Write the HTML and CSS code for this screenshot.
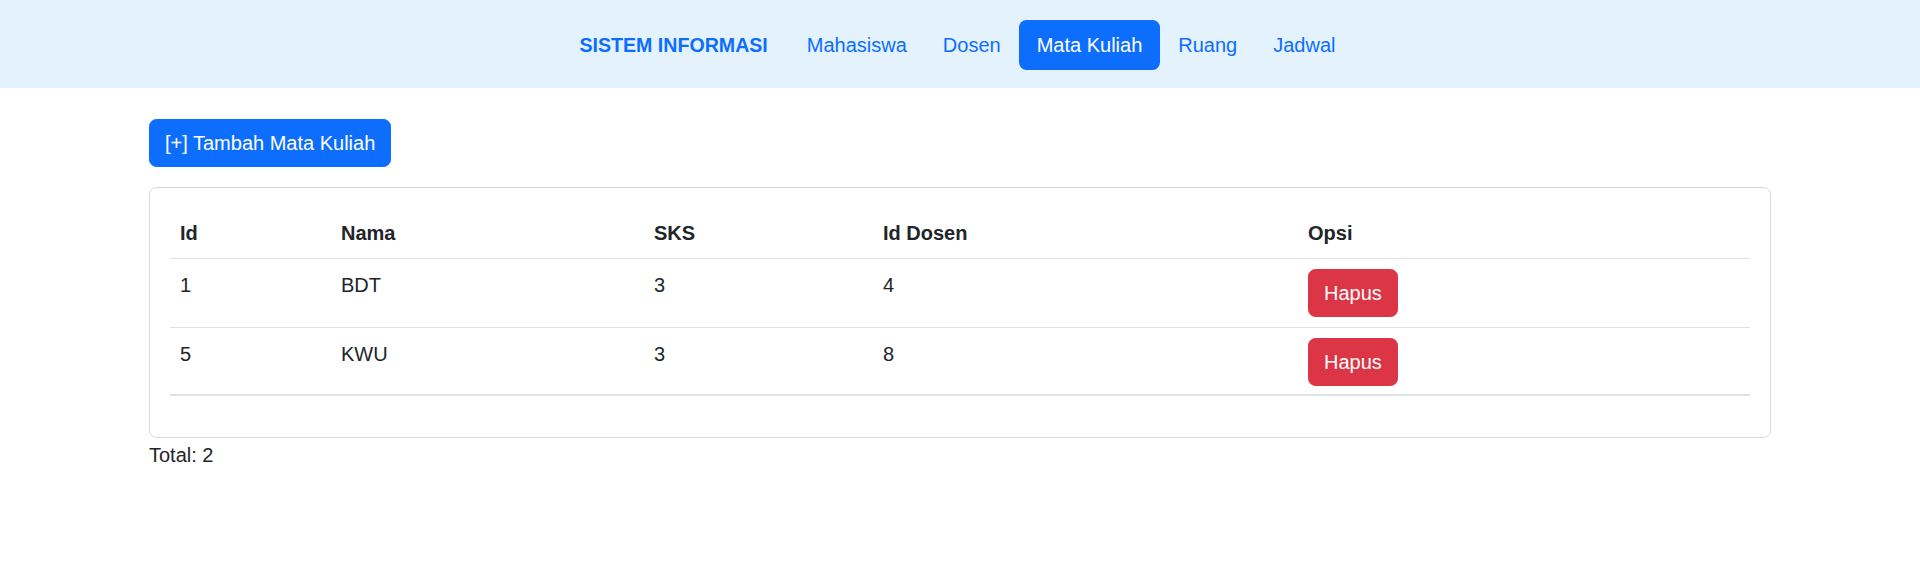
FILE: index.html
```html
<!DOCTYPE html>
<html lang="id">
<head>
<meta charset="utf-8">
<title>Mata Kuliah</title>
<link rel="stylesheet" href="styles.css">
</head>
<body>
<nav class="navbar">
  <div class="nav-inner">
    <a class="brand" href="#">SISTEM INFORMASI</a>
    <ul class="nav-links">
      <li><a class="nav-link" href="#">Mahasiswa</a></li>
      <li><a class="nav-link" href="#">Dosen</a></li>
      <li><a class="nav-link active" href="#">Mata Kuliah</a></li>
      <li><a class="nav-link" href="#">Ruang</a></li>
      <li><a class="nav-link" href="#">Jadwal</a></li>
    </ul>
  </div>
</nav>
<main class="container">
  <button class="btn btn-primary">[+] Tambah Mata Kuliah</button>
  <div class="card">
    <div class="card-body">
      <table class="table">
        <thead>
          <tr>
            <th class="c-id">Id</th>
            <th class="c-nama">Nama</th>
            <th class="c-sks">SKS</th>
            <th class="c-dosen">Id Dosen</th>
            <th class="c-opsi">Opsi</th>
          </tr>
        </thead>
        <tbody>
          <tr>
            <td>1</td>
            <td>BDT</td>
            <td>3</td>
            <td>4</td>
            <td><button class="btn btn-danger">Hapus</button></td>
          </tr>
          <tr>
            <td>5</td>
            <td>KWU</td>
            <td>3</td>
            <td>8</td>
            <td><button class="btn btn-danger">Hapus</button></td>
          </tr>
        </tbody>
      </table>
    </div>
  </div>
  <p class="total">Total: 2</p>
</main>
</body>
</html>
```
FILE: styles.css
```css
* { box-sizing: border-box; }
html, body { margin: 0; padding: 0; }
body {
  font-family: "Liberation Sans", Arial, sans-serif;
  font-size: 20px;
  line-height: 30px;
  color: #212529;
  background: #fff;
}
.navbar {
  background: #e3f2fd;
  height: 88px;
  display: flex;
  align-items: center;
  justify-content: center;
  padding-top: 2px;
}
.nav-inner {
  display: flex;
  align-items: center;
  padding-left: 13px;
}
.brand {
  color: #0d6efd;
  font-weight: bold;
  font-size: 19.6px;
  text-decoration: none;
  margin-right: 21px;
}
.nav-links {
  display: flex;
  list-style: none;
  margin: 0;
  padding: 0;
}
.nav-link {
  display: block;
  padding: 10px 18px;
  line-height: 30px;
  color: #0d6efd;
  text-decoration: none;
  border-radius: 7.5px;
}
.nav-link.active {
  background: #0d6efd;
  color: #fff;
}
.container {
  width: 1622px;
  margin: 0 auto;
  padding-top: 31px;
}
.btn {
  font-family: inherit;
  font-size: 20px;
  line-height: 30px;
  padding: 8px 15px;
  border: 1px solid transparent;
  border-radius: 7.5px;
  color: #fff;
  cursor: pointer;
}
.btn-primary { background: #0d6efd; border-color: #0d6efd; }
.btn-danger { background: #dc3545; border-color: #dc3545; }
.card {
  margin-top: 20px;
  border: 1.25px solid #d6d7d8;
  border-radius: 7.5px;
}
.card-body { padding: 20px; }
.table {
  width: 100%;
  border-collapse: collapse;
  margin-bottom: 21px;
}
.table th, .table td {
  text-align: left;
  vertical-align: top;
  padding: 10px;
  border-bottom: 1px solid #dee2e6;
}
.table th { font-weight: bold; }
.table td { padding-top: 11px; }
.table td:last-child { padding-top: 10px; }
.table tbody tr:last-child td { border-bottom: 2px solid #dee2e6; padding-bottom: 8px; }
.c-id { width: 161px; }
.c-nama { width: 313px; }
.c-sks { width: 229px; }
.c-dosen { width: 425px; }
.total { margin: 2px 0 0; }
```
